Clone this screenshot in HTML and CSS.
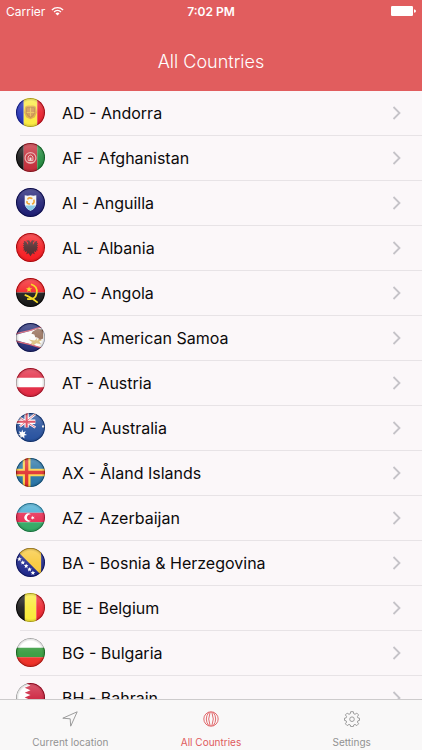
FILE: index.html
```html
<!DOCTYPE html>
<html lang="en">
<head>
<meta charset="utf-8">
<meta name="viewport" content="width=device-width, initial-scale=1">
<title>All Countries</title>
<link rel="stylesheet" href="styles.css">
</head>
<body>
<svg class="defs" aria-hidden="true">
  <defs>
    <linearGradient id="shine" x1="0" y1="0" x2="0" y2="1">
      <stop offset="0" stop-color="#fff" stop-opacity=".3"/>
      <stop offset=".5" stop-color="#fff" stop-opacity=".14"/>
      <stop offset="1" stop-color="#fff" stop-opacity=".06"/>
    </linearGradient>
    <radialGradient id="rim" cx=".5" cy=".5" r=".5">
      <stop offset=".78" stop-color="#000" stop-opacity="0"/>
      <stop offset=".92" stop-color="#000" stop-opacity=".12"/>
      <stop offset="1" stop-color="#000" stop-opacity=".5"/>
    </radialGradient>
    <symbol id="gloss" viewBox="0 0 30 30">
      <circle cx="15" cy="15" r="14" fill="url(#shine)"/>
      <circle cx="15" cy="15" r="15" fill="url(#rim)"/>
    </symbol>
    <symbol id="chevron" viewBox="0 0 10 14">
      <path d="M1.5 1 7.5 7l-6 6" fill="none" stroke="#c5c3c8" stroke-width="1.8"/>
    </symbol>
  </defs>
</svg>

<header class="header">
  <div class="status">
    <span class="carrier">Carrier
      <svg class="wifi" viewBox="0 0 14 10" aria-hidden="true"><g fill="none" stroke="#fff" stroke-width="1.5"><path d="M1 3.8a8.6 8.6 0 0 1 12 0"/><path d="M3.3 6a5.4 5.4 0 0 1 7.4 0"/></g><path d="M4.8 7.6a3.2 3.2 0 0 1 4.4 0L7 9.8z" fill="#fff"/></svg>
    </span>
    <time class="clock">7:02 PM</time>
    <svg class="battery" viewBox="0 0 25 10" aria-hidden="true"><rect width="22" height="10" rx="1.2" fill="#fff"/><path d="M23 3.2q2 .4 2 1.8t-2 1.8z" fill="#fff"/></svg>
  </div>
  <h1 class="title">All Countries</h1>
</header>

<main class="content">
  <ul class="list">
    <li><a class="row" href="#ad"><svg class="flag" viewBox="0 0 30 30" aria-hidden="true"><path fill="#1625b5" d="M0 0h8v30H0z"/><path fill="#fbe934" d="M8 0h14v30H8z"/><path fill="#e80f1c" d="M22 0h8v30h-8z"/><path d="M9.5 9q2-1.500 5.500-1 3.500-.5 5.500 1l1 6-2 5-4.500 2-4.500-2-2-5z" fill="#dda33c"/><path d="M11 10h8v6q-1 3-4 4-3-1-4-4z" fill="#d2914a" stroke="#b58238"/><path d="M15 10v9m-4-4h8" stroke="#e8c050"/><use href="#gloss"/></svg><span class="name">AD - Andorra</span><svg class="chevron" aria-hidden="true"><use href="#chevron"/></svg></a></li>
    <li><a class="row" href="#af"><svg class="flag" viewBox="0 0 30 30" aria-hidden="true"><path fill="#080808" d="M0 0h8v30H0z"/><path fill="#bf1f2c" d="M8 0h14v30H8z"/><path fill="#138331" d="M22 0h8v30h-8z"/><circle cx="15" cy="15.500" r="5.600" fill="none" stroke="#e5a09f" stroke-width="1.300"/><path d="M12.500 18v-3.500q2.500-4 5 0V18zM12 20h6" fill="none" stroke="#eec1bd"/><path d="M14 15h2v3h-2z" fill="#f6dcd7"/><use href="#gloss"/></svg><span class="name">AF - Afghanistan</span><svg class="chevron" aria-hidden="true"><use href="#chevron"/></svg></a></li>
    <li><a class="row" href="#ai"><svg class="flag" viewBox="0 0 30 30" aria-hidden="true"><path fill="#10106c" d="M0 0h30v30H0z"/><use href="#gloss"/><path d="M9 7.500q3 1 6 0 3 1 6 0V17q-1.500 4.500-6 6.500-4.500-2-6-6.500z" fill="#f4f6f5"/><path d="M9.500 18h11q-1.500 4-5.500 5.500-4-1.500-5.500-5.500z" fill="#8bcae7"/><path d="M12 12q1-3 5-1m1.500 1q1 4-2 4.500m-2 0q-4 0-3-3" fill="none" stroke="#eda63a" stroke-width="1.700"/></svg><span class="name">AI - Anguilla</span><svg class="chevron" aria-hidden="true"><use href="#chevron"/></svg></a></li>
    <li><a class="row" href="#al"><svg class="flag" viewBox="0 0 30 30" aria-hidden="true"><path fill="#f50d13" d="M0 0h30v30H0z"/><path d="m15 10-1.500-2.500-3 .5 2 1.500v3L10.500 9 8 8l.5 2-1.500.5 1.500 1.500L7 13l1.500 1L7 15.500l1.500.5L7.500 18l2 0-.5 2 2.500-1-1 3 2.500-1L15 24l2-3 2.500 1-1-3 2.500 1-.5-2h2l-1-2 1.500-.5-1.500-1.500L23 13l-1.500-1 1.500-1.500-1.500-.5.500-2-2.500 1-2 3.500v-3l2-1.500-3-.5z" fill="#44191c"/><use href="#gloss"/></svg><span class="name">AL - Albania</span><svg class="chevron" aria-hidden="true"><use href="#chevron"/></svg></a></li>
    <li><a class="row" href="#ao"><svg class="flag" viewBox="0 0 30 30" aria-hidden="true"><path fill="#f30d13" d="M0 0h30v15H0z"/><path fill="#090909" d="M0 15h30v15H0z"/><use href="#gloss"/><path d="M15.500 6.500q7 2 6 9-1.500 8-10 6M9 17.500q6 2 13.500 8" fill="none" stroke="#f7dc25" stroke-width="1.800"/><path d="m13.500 8.500.8 2.200h2.400l-1.900 1.500.7 2.300-2-1.400-2 1.400.7-2.300-1.900-1.500h2.400z" fill="#f7dc25"/></svg><span class="name">AO - Angola</span><svg class="chevron" aria-hidden="true"><use href="#chevron"/></svg></a></li>
    <li><a class="row" href="#as"><svg class="flag" viewBox="0 0 30 30" aria-hidden="true"><path fill="#17206f" d="M0 0h30v30H0z"/><path d="M-12 15Q10 10 30 3v24Q10 20-12 15z" fill="#fafafa"/><path d="M0 11Q16 8 30 3M0 19q16 3 30 8" fill="none" stroke="#d65568" stroke-width="1.200"/><path d="m17 9 5-3 6 1v9l-4 2-4-3-1-3-3-1z" fill="#8f6650"/><path d="m13 17 6 1 3-2 5 2-3 1 2 3-5-1-3 2-3-2 2-1z" fill="#d9bd7a"/><path d="m20 15 3 1-1 2" fill="none" stroke="#fff"/><use href="#gloss"/></svg><span class="name">AS - American Samoa</span><svg class="chevron" aria-hidden="true"><use href="#chevron"/></svg></a></li>
    <li><a class="row" href="#at"><svg class="flag" viewBox="0 0 30 30" aria-hidden="true"><path fill="#e01a35" d="M0 0h30v30H0z"/><path fill="#fff" d="M0 10h30v10H0z"/><use href="#gloss"/></svg><span class="name">AT - Austria</span><svg class="chevron" aria-hidden="true"><use href="#chevron"/></svg></a></li>
    <li><a class="row" href="#au"><svg class="flag" viewBox="0 0 30 30" aria-hidden="true"><path fill="#194698" d="M0 0h30v30H0z"/><path d="M4 5 20 15M20 1 4 14" stroke="#fff" stroke-width="2.500"/><path d="M11 0v15M0 9h20" stroke="#fff" stroke-width="4.500"/><path d="M4 5 20 15M20 1 4 14" stroke="#d62c43" stroke-width=".8"/><path d="M11 0v15M0 9h20" stroke="#d62c43" stroke-width="2.200"/><path d="m6.500 17 .9 2.800 2.700-.9-1.200 2.500 2.500 1.400-2.900.6.300 2.900-2.300-1.800-2.300 1.800.3-2.900-2.900-.6 2.500-1.400-1.200-2.500 2.700.9z" fill="#fff"/><circle cx="28" cy="14" r="1.200" fill="#fff"/><use href="#gloss"/></svg><span class="name">AU - Australia</span><svg class="chevron" aria-hidden="true"><use href="#chevron"/></svg></a></li>
    <li><a class="row" href="#ax"><svg class="flag" viewBox="0 0 30 30" aria-hidden="true"><path fill="#196aa0" d="M0 0h30v30H0z"/><path d="M11 0v30M0 15h30" stroke="#fad03f" stroke-width="8"/><path d="M11 0v30M0 15h30" stroke="#dc1e1d" stroke-width="3.500"/><use href="#gloss"/></svg><span class="name">AX - Åland Islands</span><svg class="chevron" aria-hidden="true"><use href="#chevron"/></svg></a></li>
    <li><a class="row" href="#az"><svg class="flag" viewBox="0 0 30 30" aria-hidden="true"><path fill="#38a5cf" d="M0 0h30v10H0z"/><path fill="#e61c45" d="M0 10h30v10H0z"/><path fill="#25a35a" d="M0 20h30v10H0z"/><use href="#gloss"/><path d="M15.500 11.700a4.200 4.200 0 1 0 0 6.600 3.400 3.400 0 1 1 0-6.600z" fill="#fff"/><path d="m17.300 13 .5 1.400 1.500-.2-1 1 1 1-1.500-.2-.5 1.400-.5-1.400-1.500.2 1-1-1-1 1.500.2z" fill="#fff"/></svg><span class="name">AZ - Azerbaijan</span><svg class="chevron" aria-hidden="true"><use href="#chevron"/></svg></a></li>
    <li><a class="row" href="#ba"><svg class="flag" viewBox="0 0 30 30" aria-hidden="true"><path fill="#111b86" d="M0 0h30v30H0z"/><path fill="#f8c42c" d="M4 6V0h22v28z"/><g fill="#fff"><path id="star" d="m3.500 9 .7 1.500 1.700.2-1.300 1.100.4 1.700-1.500-.9-1.500.9.400-1.700-1.300-1.100 1.700-.2z"/><use href="#star" x="3.500" y="3.600"/><use href="#star" x="7" y="7.200"/><use href="#star" x="10.500" y="10.800"/><use href="#star" x="14" y="14.400"/></g><use href="#gloss"/></svg><span class="name">BA - Bosnia &amp; Herzegovina</span><svg class="chevron" aria-hidden="true"><use href="#chevron"/></svg></a></li>
    <li><a class="row" href="#be"><svg class="flag" viewBox="0 0 30 30" aria-hidden="true"><path fill="#090909" d="M0 0h10v30H0z"/><path fill="#fae92b" d="M9 0h12v30H9z"/><path fill="#ee1722" d="M21 0h9v30h-9z"/><use href="#gloss"/></svg><span class="name">BE - Belgium</span><svg class="chevron" aria-hidden="true"><use href="#chevron"/></svg></a></li>
    <li><a class="row" href="#bg"><svg class="flag" viewBox="0 0 30 30" aria-hidden="true"><path fill="#fff" d="M0 0h30v10H0z"/><path fill="#23932c" d="M0 10h30v10H0z"/><path fill="#ed2118" d="M0 20h30v10H0z"/><use href="#gloss"/></svg><span class="name">BG - Bulgaria</span><svg class="chevron" aria-hidden="true"><use href="#chevron"/></svg></a></li>
    <li><a class="row" href="#bh"><svg class="flag" viewBox="0 0 30 30" aria-hidden="true"><path fill="#fff" d="M0 0h30v30H0z"/><path fill="#c8102e" d="M30 0H10l5 2.500L9 5l6 2.500L9 10l6 2.500L9 15l6 2.500L9 20l6 2.500L9 25l6 2.500-5 2.500h20z"/><use href="#gloss"/></svg><span class="name">BH - Bahrain</span><svg class="chevron" aria-hidden="true"><use href="#chevron"/></svg></a></li>
  </ul>
</main>

<nav class="tabs" aria-label="Main">
  <a class="tab" href="#location">
    <svg class="tab-icon" viewBox="0 0 16 16" aria-hidden="true"><path d="M.8 7.200 15.200.8 8.700 15.200 8.200 7.800z" fill="none" stroke="currentColor" stroke-width=".9" stroke-linejoin="round"/></svg>
    <span>Current location</span>
  </a>
  <a class="tab active" href="#countries" aria-current="page">
    <svg class="tab-icon" viewBox="0 0 16 16" aria-hidden="true"><g fill="none" stroke="currentColor" stroke-width=".9"><circle cx="8" cy="8" r="7.200"/><path d="M5.800 1.200q-5 6.800 0 13.600M7.200.9Q4.200 8 7.200 15.100M10.200 1.200q5 6.800 0 13.600M8.800.9q3 7.100 0 14.200"/></g></svg>
    <span>All Countries</span>
  </a>
  <a class="tab" href="#settings">
    <svg class="tab-icon" viewBox="0 0 16 16" aria-hidden="true"><g fill="none" stroke="currentColor" stroke-width=".9" stroke-linejoin="round"><path d="M6.700.7h2.600l.4 2 1.300.6 1.800-1.200 1.800 1.800-1.200 1.800.5 1.200 1.600.3v2.200l-1.600.4-.5 1.200 1.200 1.800-1.800 1.800-1.800-1.200-1.300.6-.4 1.600H6.700L6.300 14 5 13.400l-1.800 1.200-1.800-1.800L2.600 11l-.5-1.200-1.600-.4V7.200l1.600-.3.5-1.200-1.200-1.800 1.800-1.800L5 3.300l1.300-.6z"/><circle cx="8" cy="8.200" r="2.300"/></g></svg>
    <span>Settings</span>
  </a>
</nav>
</body>
</html>
```
FILE: styles.css
```css
* {
  box-sizing: border-box;
}

body {
  display: flex;
  flex-direction: column;
  height: 100vh;
  margin: 0;
  overflow: hidden;
  background: #fbf7f9;
  color: #0c0a0b;
  font-family: Inter, "Liberation Sans", sans-serif;
}

a {
  color: inherit;
  text-decoration: none;
}

.defs {
  position: absolute;
  width: 0;
  height: 0;
}

.header {
  flex: none;
  padding-bottom: 8px;
  background: #e15d5e;
  color: #fff;
}

.status {
  display: grid;
  grid-template-columns: 1fr auto 1fr;
  align-items: center;
  height: 22px;
  padding: 0 6px;
  font-size: 12px;
}

.carrier {
  display: flex;
  align-items: center;
  gap: 6px;
}

.wifi {
  width: 13px;
  height: 10px;
}

.clock {
  font-weight: 600;
}

.battery {
  justify-self: end;
  width: 25px;
  height: 10px;
}

.title {
  margin: 0;
  padding-top: 18px;
  font-size: 18px;
  font-weight: 300;
  line-height: 43px;
  text-align: center;
}

.content {
  flex: 1;
  min-height: 0;
  overflow: hidden;
}

.list {
  margin: 0;
  padding: 0;
  list-style: none;
}

.list li {
  padding-left: 16px;
  background: linear-gradient(#e7e3e6, #e7e3e6) 20px 100% / 100% 1px no-repeat;
}

.row {
  display: flex;
  align-items: center;
  height: 45px;
  padding: 0 20px 2px 0;
}

.flag {
  flex: none;
  width: 29px;
  height: 29px;
  margin-right: 17px;
  border-radius: 50%;
}

.name {
  flex: 1;
  font-size: 16px;
}

.chevron {
  width: 10px;
  height: 14px;
}

.tabs {
  flex: none;
  display: grid;
  grid-template-columns: repeat(3, 1fr);
  height: 51px;
  border-top: 1px solid #cdcbcc;
  background: #f9f8f8;
}

.tab {
  display: flex;
  flex-direction: column;
  align-items: center;
  gap: 8px;
  padding-top: 11px;
  color: #929292;
  font-size: 10px;
  line-height: 14px;
}

.tab-icon {
  width: 16px;
  height: 16px;
}

.active {
  color: #df5a5d;
}
```
